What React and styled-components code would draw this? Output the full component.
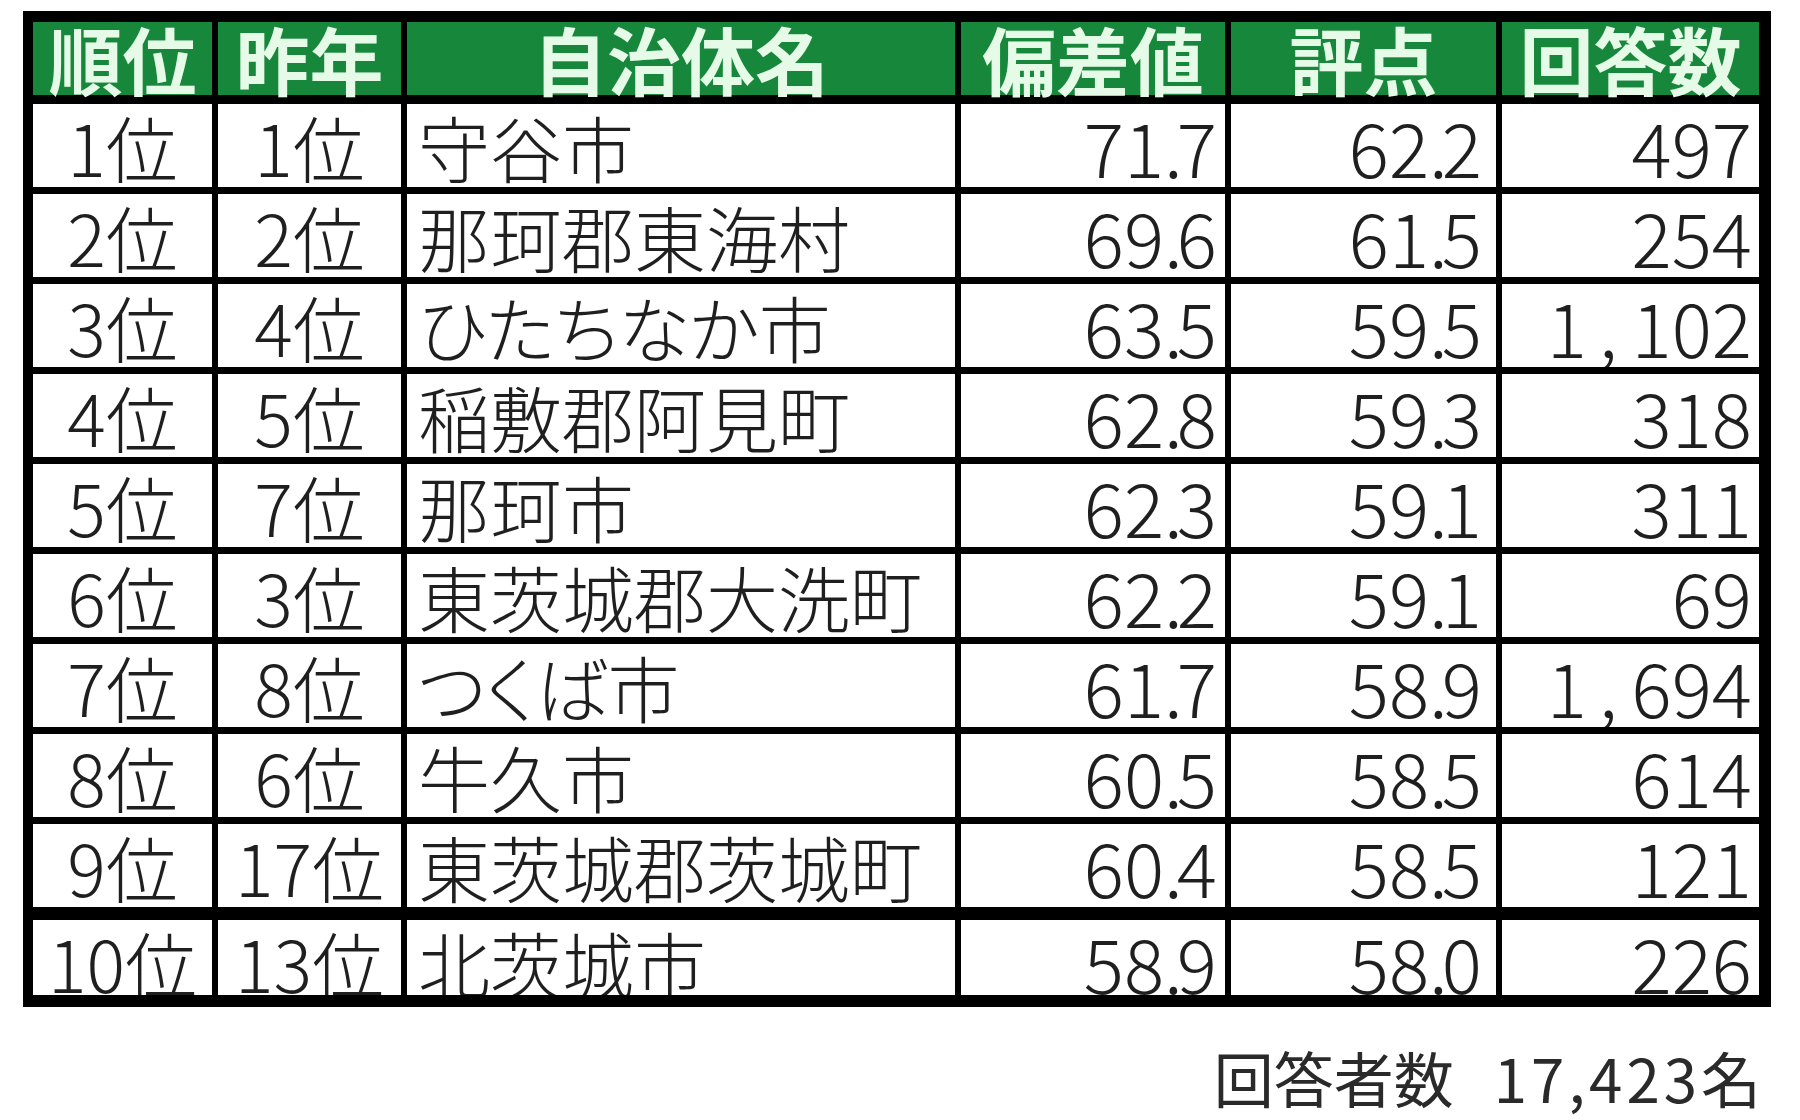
import React from 'react'
import styled, { createGlobalStyle } from 'styled-components'

const GlobalStyle = createGlobalStyle`
  html, body {
    margin: 0;
    padding: 0;
    background: #ffffff;
  }
  body {
    font-family: "Noto Sans CJK JP", "Noto Sans", sans-serif;
    color: #1f1f1f;
  }
`

const rows = [
  ['1位', '1位', '守谷市', '71.7', '62.2', '497'],
  ['2位', '2位', '那珂郡東海村', '69.6', '61.5', '254'],
  ['3位', '4位', 'ひたちなか市', '63.5', '59.5', '1,102'],
  ['4位', '5位', '稲敷郡阿見町', '62.8', '59.3', '318'],
  ['5位', '7位', '那珂市', '62.3', '59.1', '311'],
  ['6位', '3位', '東茨城郡大洗町', '62.2', '59.1', '69'],
  ['7位', '8位', 'つくば市', '61.7', '58.9', '1,694'],
  ['8位', '6位', '牛久市', '60.5', '58.5', '614'],
  ['9位', '17位', '東茨城郡茨城町', '60.4', '58.5', '121'],
  ['10位', '13位', '北茨城市', '58.9', '58.0', '226'],
]

const headers = ['順位', '昨年', '自治体名', '偏差値', '評点', '回答数']

// per column: alignment and right padding for the numbers
const columns = [
  { align: 'center' },
  { align: 'center' },
  { align: 'left' },
  { align: 'right', pr: 8 },
  { align: 'right', pr: 14 },
  { align: 'right', pr: 7 },
]

const Page = styled.div`
  display: flex;
  flex-direction: column;
  width: 1800px;
  height: 1120px;
  padding: 11px 0 0 23px;
  box-sizing: border-box;
  overflow: hidden;
`

const Table = styled.div`
  display: grid;
  width: 1748px;
  box-sizing: border-box;
  background: #000;
  padding: 11px 11px 12px 10px;
  grid-template-columns: 179px 183px 548px 264px 265px 257px;
  grid-template-rows: 75px repeat(9, 83px) 81px;
  column-gap: 6px;
  row-gap: 7px;
`

const HeadCell = styled.div`
  background: #17873b;
  color: #e6fae8;
  font-weight: 700;
  font-size: 74px;
  line-height: 71px;
  height: 73px;
  margin-bottom: 2px;
  text-align: center;
  white-space: nowrap;
`

const Cell = styled.div`
  background: #fff;
  overflow: hidden;
  white-space: nowrap;
  font-weight: 300;
  font-size: ${(p) => (p.$num ? 75 : 72)}px;
  line-height: 83px;
  text-align: ${(p) => p.$align};
  padding: ${(p) => (p.$align === 'left' ? '0 0 0 11px' : `0 ${p.$pr || 0}px 0 0`)};
  margin-top: ${(p) => (p.$last ? 6 : 0)}px;
  font-feature-settings: ${(p) => (p.$align === 'left' ? '"palt"' : 'normal')};
`

const Sep = styled.span`
  padding: ${(p) => (p.$comma ? '0 14px 0 12px' : '0')};
  letter-spacing: ${(p) => (p.$comma ? 0 : -6)}px;
`

const Footer = styled.div`
  display: flex;
  justify-content: flex-end;
  gap: 40px;
  width: 1748px;
  box-sizing: border-box;
  padding-right: 6px;
  margin-top: 40px;
  font-size: 60px;
  line-height: 60px;
  color: #2a2a2a;
`

const Count = styled.span`
  letter-spacing: 4px;
`

function NumberText({ value }) {
  const parts = value.split(/([.,])/)
  return (
    <span>
      {parts.map((part, k) =>
        part === ',' || part === '.' ? (
          <Sep key={k} $comma={part === ','}>{part}</Sep>
        ) : (
          <React.Fragment key={k}>{part}</React.Fragment>
        )
      )}
    </span>
  )
}

export default function App() {
  return (
    <>
      <GlobalStyle />
      <Page>
        <Table>
          {headers.map((h) => (
            <HeadCell key={h}>{h}</HeadCell>
          ))}
          {rows.map((row, i) =>
            row.map((value, j) => {
              const col = columns[j]
              const num = col.align === 'right'
              return (
                <Cell
                  key={`${i}-${j}`}
                  $align={col.align}
                  $pr={col.pr}
                  $num={num}
                  $last={i === rows.length - 1}
                >
                  {num ? <NumberText value={value} /> : value}
                </Cell>
              )
            })
          )}
        </Table>
        <Footer>
          <span>回答者数</span>
          <Count>17,423名</Count>
        </Footer>
      </Page>
    </>
  )
}
